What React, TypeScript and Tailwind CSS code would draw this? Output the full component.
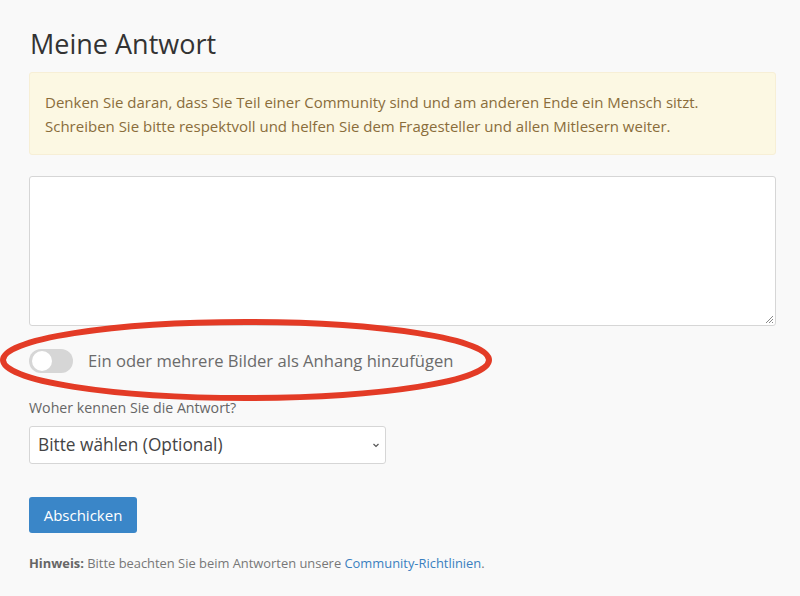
import React from "react";

export default function App() {
  return (
    <div
      className="relative w-[800px] h-[596px] overflow-hidden bg-[#f9f9f9]"
      style={{ fontFamily: '"Open Sans", "Noto Sans", sans-serif' }}
    >
      <div className="pl-[29px] pr-[24px] pt-[26px]">
        <h2 className="text-[27px] leading-[36px] text-[#333] font-normal pl-[1px]">Meine Antwort</h2>
        <div className="mt-[10px] bg-[#fcf8e3] border border-[#f7efd6] rounded-[3px] px-[15px] pt-[17px] pb-[16px] text-[15px] leading-[24px] text-[#8a6d3b]">
          <div>Denken Sie daran, dass Sie Teil einer Community sind und am anderen Ende ein Mensch sitzt.</div>
          <div>Schreiben Sie bitte respektvoll und helfen Sie dem Fragesteller und allen Mitlesern weiter.</div>
        </div>
        <div className="mt-[21px] h-[150px] bg-white border border-[#d6d6d6] rounded-[3px] relative">
          <svg className="absolute right-[1px] bottom-[1px]" width="10" height="10" viewBox="0 0 10 10">
            <path d="M9 2 L2 9 M9 5 L5 9 M9 8 L8 9" stroke="#888" strokeWidth="1" />
          </svg>
        </div>
        <div className="mt-[22px] flex items-center h-[26px]">
          <div className="w-[44px] h-[24px] rounded-full bg-[#d6d6d6] relative">
            <div className="absolute left-[3px] top-[2px] w-[20px] h-[20px] rounded-full bg-white" />
          </div>
          <span className="ml-[15px] text-[16.6px] text-[#6b6b6b]">Ein oder mehrere Bilder als Anhang hinzufügen</span>
        </div>
        <div className="mt-[24px] text-[14.2px] leading-[20px] text-[#666]">Woher kennen Sie die Antwort?</div>
        <div className="mt-[8px] w-[357px] h-[38px] bg-white border border-[#d6d6d6] rounded-[3px] flex items-center justify-between pl-[8px] pr-[4px]">
          <span className="text-[17.3px] text-[#444]">Bitte wählen (Optional)</span>
          <svg width="10" height="10" viewBox="0 0 10 10">
            <path d="M2.5 4 L5 6.5 L7.5 4" stroke="#555" strokeWidth="1.2" fill="none" />
          </svg>
        </div>
        <button className="mt-[33px] w-[108px] h-[36px] bg-[#3a86c8] rounded-[3px] text-white text-[15px]">Abschicken</button>
        <div className="mt-[21px] text-[12.9px] text-[#777]">
          <span className="font-bold text-[#666]">Hinweis:</span> Bitte beachten Sie beim Antworten unsere{" "}
          <span className="text-[#3a7fbf]">Community-Richtlinien</span>.
        </div>
      </div>
      <svg className="absolute left-0 top-[316px]" width="500" height="90" viewBox="0 0 500 90">
        <ellipse cx="246" cy="44" rx="243" ry="38" fill="none" stroke="#e33b26" strokeWidth="6" />
      </svg>
    </div>
  );
}
